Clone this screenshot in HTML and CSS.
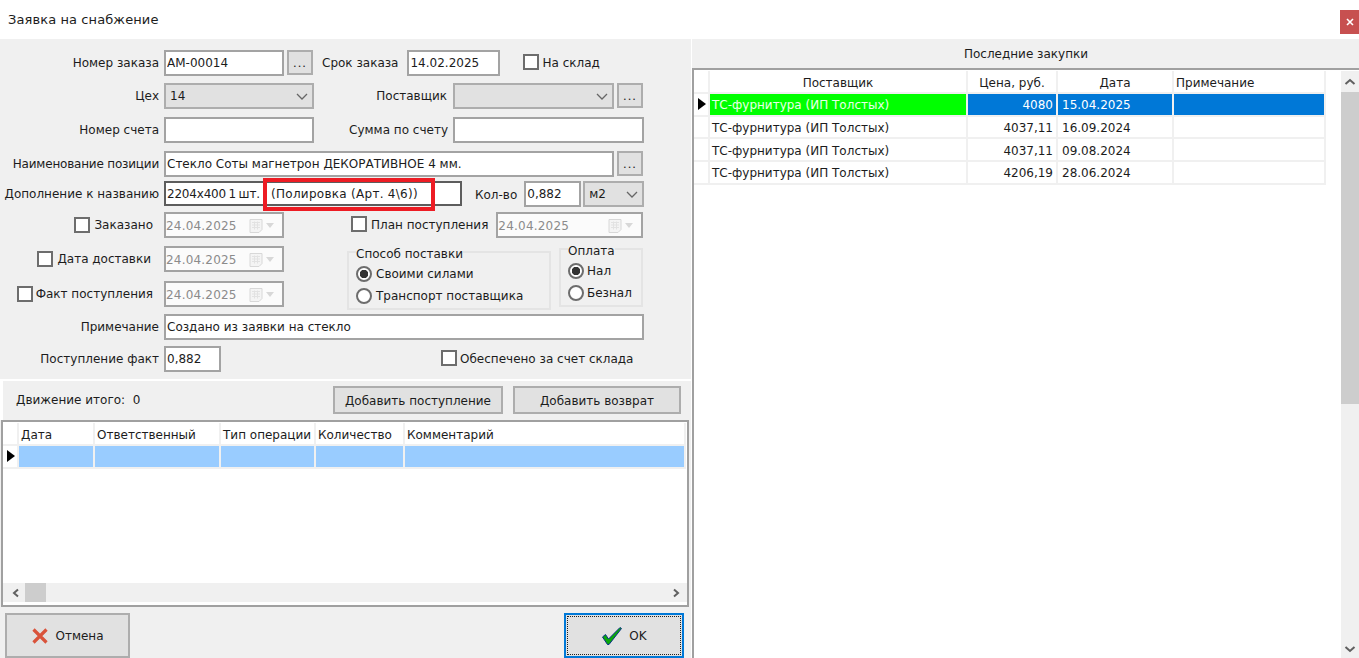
FILE: index.html
```html
<!DOCTYPE html>
<html lang="ru">
<head>
<meta charset="utf-8">
<title>Заявка на снабжение</title>
<link rel="stylesheet" href="styles.css">
</head>
<body>
<svg class="defs" width="0" height="0" aria-hidden="true">
  <symbol id="chev" viewBox="0 0 12 7"><path d="M1 1l5 5 5-5" fill="none" stroke="#666" stroke-width="1.300"/></symbol>
  <symbol id="cal" viewBox="0 0 26 16">
    <path d="M1 1.500h12v10l-3 3H1z" fill="#f4f4f4" stroke="#d8d8d8"/>
    <path d="M3 4.500h8M3 7h8M3 9.500h8M5.500 3.500v8M8.500 3.500v8" stroke="#e2e2e2" fill="none"/>
    <path d="M17 5h8l-4 5z" fill="#d8d8d8"/>
  </symbol>
</svg>
<header class="titlebar">
  <h1 class="title">Заявка на снабжение</h1>
  <button class="close" aria-label="Закрыть"><svg width="8" height="8" viewBox="0 0 8 8"><path d="M1 1l6 6M7 1l-6 6" stroke="#fff" stroke-width="1.6"/></svg></button>
</header>
<main class="workspace">
  <section class="left">
    <form class="form">
      <div class="row h33">
        <label class="lead">Номер заказа</label>
        <input class="field w120" value="АМ-00014">
        <button type="button" class="dots ml3">...</button>
        <label class="plain ml9">Срок заказа</label>
        <input class="field w93 ml9" value="14.02.2025">
        <input type="checkbox" class="cb ml23"><label class="plain ml3">На склад</label>
      </div>
      <div class="row h34">
        <label class="lead">Цех</label>
        <div class="select w150"><span>14</span><svg class="chev"><use href="#chev"/></svg></div>
        <label class="plain lbl-post">Поставщик</label>
        <div class="select w161 ml6"><span></span><svg class="chev"><use href="#chev"/></svg></div>
        <button type="button" class="dots ml3">...</button>
      </div>
      <div class="row h34">
        <label class="lead">Номер счета</label>
        <input class="field w150">
        <label class="plain lbl-sum">Сумма по счету</label>
        <input class="field w191 ml5">
      </div>
      <div class="row h30">
        <label class="lead tight">Наименование позиции</label>
        <input class="field w450" value="Стекло Соты магнетрон ДЕКОРАТИВНОЕ 4 мм.">
        <button type="button" class="dots ml3">...</button>
      </div>
      <div class="row h31">
        <label class="lead">Дополнение к названию</label>
        <div class="addon">
          <div class="field dark"><span class="size">2204х400 1 шт.</span><span class="extra">(Полировка (Арт. 4\6))</span></div>
          <span class="mark"></span>
        </div>
        <label class="plain ml13 low">Кол-во</label>
        <input class="field w57 ml7" value="0,882">
        <div class="select w61 ml2"><span>м2</span><svg class="chev"><use href="#chev"/></svg></div>
      </div>
      <div class="row h34">
        <div class="lead pr11"><input type="checkbox" class="cb"><label class="ml4">Заказано</label></div>
        <div class="date w120"><span>24.04.2025</span><svg class="cal"><use href="#cal"/></svg></div>
        <input type="checkbox" class="cb ml67"><label class="plain ml4">План поступления</label>
        <div class="date w147 ml8"><span>24.04.2025</span><svg class="cal"><use href="#cal"/></svg></div>
      </div>
      <div class="split">
        <div class="split-rows">
          <div class="row h35">
            <div class="lead pr13"><input type="checkbox" class="cb"><label class="ml4">Дата доставки</label></div>
            <div class="date w120"><span>24.04.2025</span><svg class="cal"><use href="#cal"/></svg></div>
          </div>
          <div class="row h33">
            <div class="lead pr11"><input type="checkbox" class="cb"><label class="ml3">Факт поступления</label></div>
            <div class="date w120"><span>24.04.2025</span><svg class="cal"><use href="#cal"/></svg></div>
          </div>
        </div>
        <fieldset class="group delivery">
          <legend>Способ поставки</legend>
          <div class="radio"><input type="radio" name="d" class="rb" checked><label>Своими силами</label></div>
          <div class="radio"><input type="radio" name="d" class="rb"><label>Транспорт поставщика</label></div>
        </fieldset>
        <fieldset class="group payment">
          <legend>Оплата</legend>
          <div class="radio"><input type="radio" name="p" class="rb" checked><label>Нал</label></div>
          <div class="radio"><input type="radio" name="p" class="rb"><label>Безнал</label></div>
        </fieldset>
      </div>
      <div class="row h32">
        <label class="lead">Примечание</label>
        <input class="field w480" value="Создано из заявки на стекло">
      </div>
      <div class="row h26">
        <label class="lead">Поступление факт</label>
        <input class="field w57" value="0,882">
        <input type="checkbox" class="cb ml220"><label class="plain ml3">Обеспечено за счет склада</label>
      </div>
    </form>
    <div class="movement">
      <span class="total">Движение итого:&nbsp; 0</span>
      <button class="btn add-in">Добавить поступление</button>
      <button class="btn add-out">Добавить возврат</button>
    </div>
    <div class="lower">
      <div class="grid moves">
        <table class="tbl">
          <colgroup><col class="c16"><col class="c76"><col class="c126"><col class="c95"><col class="c89"><col class="c281"></colgroup>
          <thead><tr><th></th><th class="tl">Дата</th><th class="tl">Ответственный</th><th class="tl">Тип операции</th><th class="tl">Количество</th><th class="tl">Комментарий</th></tr></thead>
          <tbody><tr class="lightsel"><td class="ind"><i class="arrow"></i></td><td></td><td></td><td></td><td></td><td></td></tr></tbody>
        </table>
        <div class="hscroll">
          <svg class="sb-arrow" width="10" height="10" viewBox="0 0 10 10"><path d="M7 1.500L3 5l4 3.500" fill="none" stroke="#606060" stroke-width="2"/></svg>
          <span class="hthumb"></span>
          <svg class="sb-arrow end" width="10" height="10" viewBox="0 0 10 10"><path d="M3 1.500L7 5l-4 3.500" fill="none" stroke="#606060" stroke-width="2"/></svg>
        </div>
      </div>
      <div class="actions">
        <button class="btn action">
          <svg width="18" height="18" viewBox="0 0 18 18"><path d="M2.500 2.500l13 13M15.500 2.500l-13 13" stroke="#d9533b" stroke-width="3.200"/></svg>
          <span>Отмена</span>
        </button>
        <button class="btn action default">
          <svg width="22" height="20" viewBox="0 0 22 20"><path d="M1.500 11l3-2.500 3 4.500L19 1.500l1.500 1L8 18.500H6.500z" fill="#0aa80a" stroke="#0b2f8a" stroke-width="1"/></svg>
          <span>OK</span>
        </button>
      </div>
    </div>
  </section>
  <section class="right">
    <div class="right-head">Последние закупки</div>
    <div class="right-body">
      <div class="grid purchases">
        <table class="tbl">
          <colgroup><col class="c16"><col class="c258"><col class="c90"><col class="c116"><col class="c152"></colgroup>
          <thead><tr><th></th><th>Поставщик</th><th>Цена, руб.</th><th>Дата</th><th class="tl">Примечание</th></tr></thead>
          <tbody>
            <tr class="sel"><td class="ind"><i class="arrow"></i></td><td class="green">ТС-фурнитура (ИП Толстых)</td><td class="num">4080</td><td class="day">15.04.2025</td><td></td></tr>
            <tr><td class="ind"></td><td>ТС-фурнитура (ИП Толстых)</td><td class="num">4037,11</td><td class="day">16.09.2024</td><td></td></tr>
            <tr><td class="ind"></td><td>ТС-фурнитура (ИП Толстых)</td><td class="num">4037,11</td><td class="day">09.08.2024</td><td></td></tr>
            <tr><td class="ind"></td><td>ТС-фурнитура (ИП Толстых)</td><td class="num">4206,19</td><td class="day">28.06.2024</td><td></td></tr>
          </tbody>
        </table>
      </div>
      <div class="vscroll">
        <svg class="v-arrow" width="12" height="10" viewBox="0 0 12 10"><path d="M1.500 7L6 3l4.500 4" fill="none" stroke="#606060" stroke-width="2"/></svg>
        <span class="vthumb"></span>
        <svg class="v-arrow bottom" width="12" height="10" viewBox="0 0 12 10"><path d="M1.500 3L6 7l4.500-4" fill="none" stroke="#606060" stroke-width="2"/></svg>
      </div>
    </div>
  </section>
</main>
</body>
</html>
```
FILE: styles.css
```css
* { box-sizing: border-box; }
html, body { margin: 0; height: 100%; }
body {
  width: 1359px; height: 658px; overflow: hidden; background: #fff; color: #1c1c1c;
  font: 12px/16px "DejaVu Sans", "Noto Sans", sans-serif;
}
.defs { position: absolute; }
input, button { font: inherit; color: inherit; margin: 0; }

.titlebar { height: 39px; display: flex; align-items: flex-start; justify-content: space-between; padding: 10px 0 0 8px; }
.title { margin: 0; font-size: 13px; font-weight: 400; line-height: 19px; letter-spacing: .1px; }
.close { width: 19px; height: 24px; padding: 0; border: 0; background: #c75050; display: flex; align-items: center; justify-content: center; }

.workspace { display: flex; height: 619px; }
.left { width: 691px; flex: none; }
.right { flex: 1; min-width: 0; margin-left: 1px; display: flex; flex-direction: column; }

.form { height: 340px; background: #f0f0f0; padding-top: 11px; }
.row { display: flex; align-items: flex-start; }
.h26 { height: 26px; } .h30 { height: 30px; } .h31 { height: 31px; } .h32 { height: 32px; }
.h33 { height: 33px; } .h34 { height: 34px; } .h35 { height: 35px; }
.lead { width: 164px; flex: none; height: 25px; display: flex; align-items: center; justify-content: flex-end; padding-right: 5px; white-space: nowrap; }
.tight { letter-spacing: -.2px; }
.pr11 { padding-right: 11px; } .pr13 { padding-right: 13px; }
.plain { height: 25px; display: flex; align-items: center; white-space: nowrap; }
.low { padding-top: 2px; }
.lbl-post { width: 133px; justify-content: flex-end; margin-left: 0; }
.lbl-sum { width: 134px; justify-content: flex-end; }

.field, .select, .date { height: 26px; border: 2px solid #a3a3a3; flex: none; padding: 0 1px; display: flex; align-items: center; outline: 0; }
.field { background: #fff; }
.field.dark { border-color: #5d5d5d; width: 100%; height: 25px; white-space: nowrap; overflow: hidden; }
.size { width: 104px; flex: none; overflow: hidden; letter-spacing: -.2px; word-spacing: -1px; }
.extra { letter-spacing: .28px; }
.select { background: #e1e1e1; border-color: #adadad; justify-content: space-between; padding: 0 4px; }
.chev { width: 12px; height: 7px; }
.date { background: #fbfbfb; justify-content: space-between; color: #8b8b8b; padding: 2px 7px 0 0; letter-spacing: .2px; }
.cal { width: 26px; height: 16px; }
.addon { position: relative; width: 298px; flex: none; }
.mark { position: absolute; left: 99px; top: -3px; width: 172px; height: 33px; border: 4px solid #ed1c24; }

.w57 { width: 57px; } .w61 { width: 61px; } .w93 { width: 93px; } .w120 { width: 120px; } .w147 { width: 147px; }
.w150 { width: 150px; } .w161 { width: 161px; } .w191 { width: 191px; } .w450 { width: 450px; } .w480 { width: 480px; }
.ml2 { margin-left: 2px; } .ml3 { margin-left: 3px; } .ml4 { margin-left: 4px; } .ml5 { margin-left: 5px; } .ml6 { margin-left: 6px; }
.ml7 { margin-left: 7px; } .ml8 { margin-left: 8px; } .ml9 { margin-left: 9px; } .ml13 { margin-left: 13px; } .ml23 { margin-left: 23px; }
.ml67 { margin-left: 67px; } .ml220 { margin-left: 220px; }

.dots { width: 26px; height: 25px; padding: 0; background: #e1e1e1; border: 2px solid #adadad; line-height: 16px; letter-spacing: 1px; font-family: "Liberation Sans", sans-serif; font-size: 13px; flex: none; }
.cb, .rb { appearance: none; -webkit-appearance: none; width: 16px; height: 16px; margin: 0; background: #fff; border: 2px solid #6d6d6d; flex: none; }
.row > .cb { margin-top: 4px; }
.row > .cb.ml23 { margin-left: 23px; } .row > .cb.ml67 { margin-left: 67px; } .row > .cb.ml220 { margin-left: 220px; }
.rb { border-radius: 50%; }
.rb:checked { background: radial-gradient(circle, #333 0 4px, #fff 4.500px); }

.split { display: flex; align-items: flex-start; height: 68px; }
.split-rows { width: 347px; flex: none; }
.group { margin: 0; padding: 0 0 0 7px; border: 2px solid #e4e4e4; min-width: 0; }
.group legend { padding: 4px 0 0; line-height: 14px; margin-left: 0; }
.delivery { width: 204px; height: 67px; margin-top: -3px; }
.payment { width: 84px; height: 67px; margin: -6px 0 0 8px; }
.radio { display: flex; align-items: center; gap: 4px; height: 22px; }
.delivery .radio:first-of-type { margin-top: 2px; }
.payment .radio:first-of-type { margin-top: 2px; }
.payment .radio { gap: 3px; }

.movement { margin: 2px 0 0 3px; height: 39px; background: #f0f0f0; display: flex; align-items: flex-start; padding: 5px 0 0 13px; }
.total { width: 317px; line-height: 29px; flex: none; }
.btn { background: #e1e1e1; border: 2px solid #adadad; padding: 1px 0 0; height: 28px; flex: none; }
.add-in { width: 170px; }
.add-out { width: 168px; margin-left: 10px; }

.lower { background: #f0f0f0; height: 238px; }
.grid { border: 2px solid #a0a0a0; background: #fff; }
.moves { width: 688px; height: 187px; margin-left: 1px; position: relative; display: flex; flex-direction: column; justify-content: space-between; }
.tbl { table-layout: fixed; border-collapse: separate; border-spacing: 0; width: max-content; margin-top: 1px; }
.c16 { width: 16px; } .c76 { width: 76px; } .c126 { width: 126px; } .c95 { width: 95px; } .c89 { width: 89px; } .c281 { width: 281px; }
.c258 { width: 258px; } .c90 { width: 90px; } .c116 { width: 116px; } .c152 { width: 152px; }
.tbl th, .tbl td { border-right: 2px solid #f0f0f0; border-bottom: 2px solid #f0f0f0; padding: 2px 2px 0; height: 23px; font-weight: 400; white-space: nowrap; overflow: hidden; }
.tbl td { height: 22.670px; }
.tbl .tl { text-align: left; }
.tbl .num { text-align: right; padding-right: 3px; }
.tbl .day { padding-left: 4px; }
.tbl .ind { padding: 0 0 0 4px; }
.arrow { display: block; width: 0; height: 0; border-left: 8px solid #000; border-top: 6px solid transparent; border-bottom: 6px solid transparent; }
.lightsel td:not(.ind) { background: #99ccff; }
.sel td:not(.ind) { background: #0078d7; color: #fff; }
.sel td.green { background: #00ff00; color: #e8ffe8; }

.hscroll { height: 19px; background: #f0f0f0; display: flex; align-items: center; margin-bottom: 3px; padding: 0 6px 0 8px; }
.hthumb { width: 21px; height: 19px; background: #cdcdcd; margin-left: 4px; }
.sb-arrow.end { margin-left: auto; }

.actions { display: flex; justify-content: space-between; padding: 6px 7px 0 5px; }
.action { width: 120px; height: 45px; display: flex; align-items: center; justify-content: center; gap: 6px; }
.actions .action:first-child { width: 125px; }
.action.default { border-color: #0078d7; outline: 1px dotted #222; outline-offset: -4px; }

.right-head { height: 29px; background: #f0f0f0; text-align: center; line-height: 30px; padding-left: 1px; }
.right-body { flex: 1; display: flex; min-height: 0; border-top: 2px solid #a0a0a0; }
.purchases { flex: 1; border-width: 0 0 0 2px; }
.vscroll { width: 18px; background: #f0f0f0; margin-top: 1px; display: flex; flex-direction: column; align-items: center; position: relative; }
.v-arrow { margin-top: 6px; height: 10px; margin-bottom: 5px; }
.vthumb { width: 18px; height: 312px; background: #cdcdcd; }
.v-arrow.bottom { margin-top: auto; margin-bottom: 4px; }
```
